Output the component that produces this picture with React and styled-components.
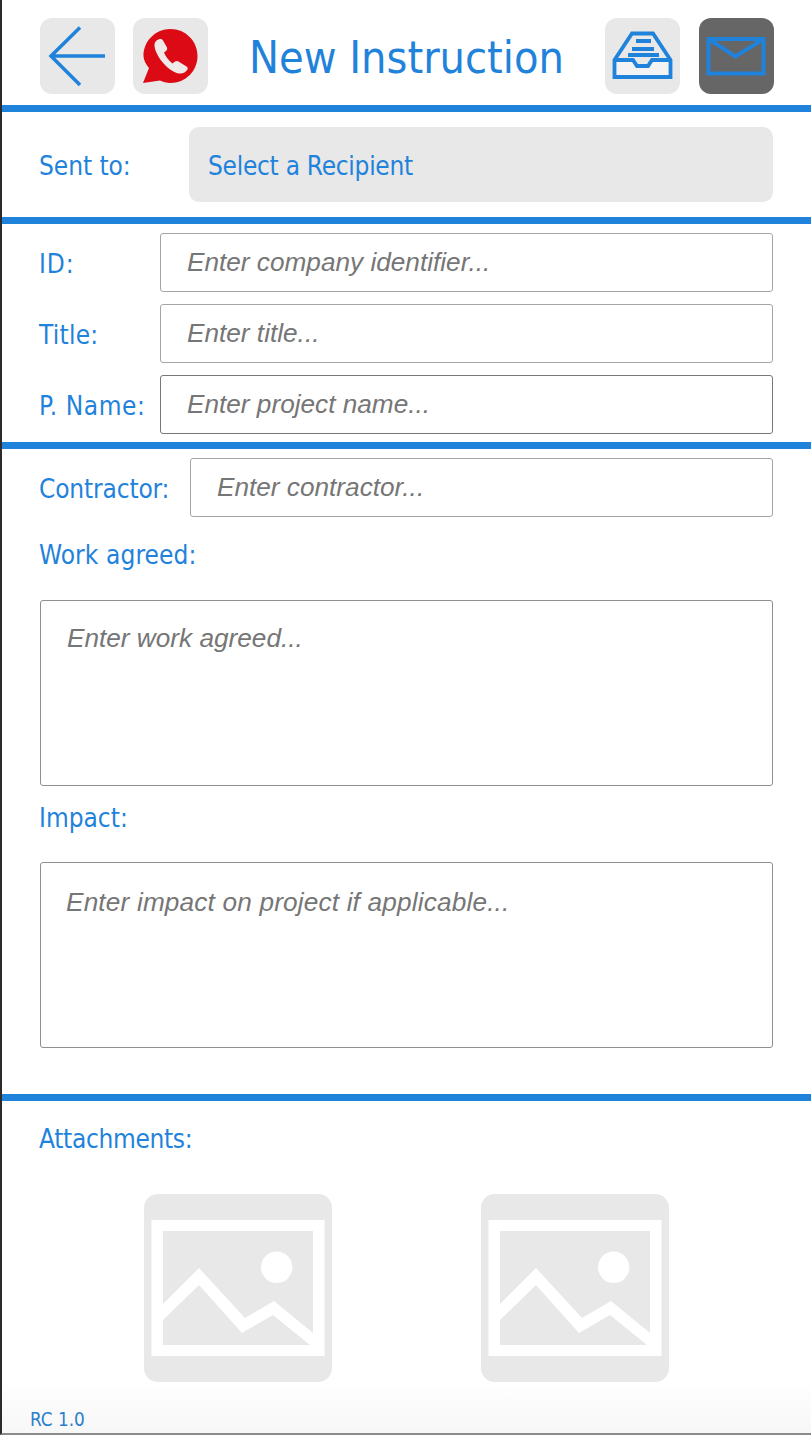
import React from "react";
import styled, { createGlobalStyle } from "styled-components";

const BLUE = "#1f82db";
const GREY = "#e8e8e8";

const Global = createGlobalStyle`
  html, body { margin: 0; padding: 0; background: #fff; }
  * { box-sizing: border-box; }
`;

const Page = styled.div`
  width: 811px;
  height: 1435px;
  overflow: hidden;
  border-left: 2px solid #2b2b2b;
  border-bottom: 2px solid #8a8a8a;
  background: linear-gradient(#fff 1380px, #f7f7f7);
  display: flex;
  flex-direction: column;
  font-family: "DejaVu Sans Condensed", "DejaVu Sans", sans-serif;
  color: ${BLUE};
`;

const Header = styled.header`
  height: 105px;
  flex: none;
  display: flex;
  align-items: flex-start;
  padding: 18px 0 0 38px;
`;

const IconButton = styled.button`
  width: 75px;
  height: 76px;
  flex: none;
  border: 0;
  padding: 0;
  margin-left: ${(p) => p.$gap || 0}px;
  border-radius: 12px;
  background: ${(p) => (p.$active ? "#666666" : GREY)};
  display: flex;
  align-items: center;
  justify-content: center;
`;

const Title = styled.h1`
  margin: 0 0 0 41px;
  width: 356px;
  font-size: 44.6px;
  line-height: 80px;
  font-weight: 400;
  white-space: nowrap;
  color: ${BLUE};
`;

const Rule = styled.div`
  height: 7px;
  flex: none;
  background: ${BLUE};
`;

const Recipient = styled.section`
  height: 105px;
  flex: none;
  display: flex;
  align-items: flex-start;
  padding: 15px 38px 0;
`;

const Label = styled.label`
  display: block;
  flex: none;
  width: ${(p) => p.$width || "auto"};
  font-size: 26px;
  line-height: 32px;
  letter-spacing: ${(p) => p.$tracking ?? -0.15}px;
  white-space: nowrap;
  margin-left: -1px;
`;

const RowLabel = styled(Label)`
  padding-top: 4px;
  margin-right: 1px;
`;

const RecipientLabel = styled(Label)`
  width: 150px;
  margin-top: 23px;
`;

const SelectBox = styled.div`
  width: 584px;
  height: 75px;
  border-radius: 10px;
  background: ${GREY};
  padding-left: 19px;
  font-size: 26px;
  letter-spacing: -0.28px;
  line-height: 78px;
`;

const Fields = styled.section`
  height: 218px;
  flex: none;
  padding: 9px 38px 0;
  display: flex;
  flex-direction: column;
  gap: 13px;
`;

const Row = styled.div`
  display: flex;
  align-items: center;
  flex: none;
  height: 58px;
`;

const TextInput = styled.input`
  flex: 1;
  min-width: 0;
  height: 59px;
  border: 1px solid #a5a5a5;
  border-radius: 3px;
  background: #fff;
  padding: 0 0 0 26px;
  font: italic 26.2px "Liberation Sans", Arial, sans-serif;
  outline: none;
  &::placeholder { color: #767676; opacity: 1; }
`;

const DarkInput = styled(TextInput)`
  border-color: #777;
`;

const Details = styled.section`
  height: 645px;
  flex: none;
  padding: 9px 38px 0;
  display: flex;
  flex-direction: column;
`;

const BlockLabel = styled(Label)`
  margin-top: ${(p) => p.$top}px;
  margin-bottom: ${(p) => p.$bottom}px;
`;

const TextArea = styled.textarea`
  display: block;
  width: 733px;
  height: 186px;
  flex: none;
  resize: none;
  border: 1px solid #8f8f8f;
  border-radius: 3px;
  padding: ${(p) => p.$top}px 26px 0 ${(p) => p.$left}px;
  font: italic 26.2px/32px "Liberation Sans", Arial, sans-serif;
  letter-spacing: ${(p) => p.$tracking || 0}px;
  outline: none;
  background: #fff;
  &::placeholder { color: #767676; opacity: 1; }
`;

const Attachments = styled.section`
  flex: 1;
  padding: 22px 38px 0;
  display: flex;
  flex-direction: column;
`;

const Tiles = styled.div`
  display: flex;
  gap: 149px;
  margin: 39px 0 0 104px;
`;

const Tile = styled.div`
  width: 188px;
  height: 188px;
  border-radius: 14px;
  background: ${GREY};
`;

const Version = styled.div`
  margin: 27px 0 0 -10px;
  font-size: 18.8px;
  line-height: 22px;
  color: #2a7fcc;
`;

const ArrowIcon = () => (
  <svg width="75" height="76" viewBox="0 0 75 76" fill="none">
    <path d="M11 38H65M40 9.500L11 38L40 67" stroke={BLUE} strokeWidth="3.500" />
  </svg>
);

const PhoneIcon = () => (
  <svg width="75" height="76" viewBox="0 0 75 76">
    <path d="M37.500 11C52.500 11 64.500 23 64.500 38C64.500 53 52.500 65 37.500 65C33.500 65 30 64 27 62.500L10 65L16 50C13 46.500 10.500 42 10.500 38C10.500 23 22.500 11 37.500 11Z" fill="#dc0a14" />
    <path d="M21.500 27C21.500 24 24 21.500 27 21C28.500 20.800 29.500 21.500 30 22.500L34 29.500C34.500 31 34 32 33 33L31 34.500C32.500 38.500 36 43 39.500 45.500L42 43.500C43 42.800 44.500 42.800 45.500 43.500L53.500 48.500C54.800 49.500 55 50.500 54.500 51.500C53 54 49.500 56 46 55.500C40 54.500 33.500 49.500 28.500 43C24.500 37.500 21.500 32 21.500 27Z" fill="#f0e9e9" />
  </svg>
);

const InboxIcon = () => (
  <svg width="75" height="76" viewBox="0 0 75 76" fill="none" stroke={BLUE}>
    <path d="M9 43H28L32 48.500H43L47 43H66V59H9Z" fill="#f3f3f3" stroke="none" />
    <path d="M9.500 59V42L27 15.500H48L65.500 42V59Z" strokeWidth="3.800" />
    <path d="M9.500 42H28L32 48H43L47 42H65.500" strokeWidth="3.800" />
    <path d="M31 23H46M27 31H49M23 37H54" strokeWidth="3.800" />
  </svg>
);

const MailIcon = () => (
  <svg width="75" height="76" viewBox="0 0 75 76" fill="none" stroke={BLUE} strokeWidth="4">
    <path d="M9.500 21H64.500V55.500H9.500Z" />
    <path d="M9.500 21L36.500 38.500L64.500 21" />
  </svg>
);

const ImageIcon = () => (
  <svg width="188" height="188" viewBox="0 0 188 188">
    <path d="M7.500 26H180.500V162H7.500ZM19 37V151H169V37Z" fill="#fff" fillRule="evenodd" />
    <path d="M19 110L55 74L101 124L130 107L169 139V151H166L129 121L98 139L55 91L19 126Z" fill="#fff" />
    <circle cx="132.700" cy="73.300" r="15.700" fill="#fff" />
  </svg>
);

export default function App() {
  return (
    <>
      <Global />
      <Page>
        <Header>
          <IconButton aria-label="Back"><ArrowIcon /></IconButton>
          <IconButton aria-label="Call" $gap={18}><PhoneIcon /></IconButton>
          <Title>New Instruction</Title>
          <IconButton aria-label="Inbox"><InboxIcon /></IconButton>
          <IconButton aria-label="New mail" $gap={19} $active><MailIcon /></IconButton>
        </Header>
        <Rule />
        <Recipient>
          <RecipientLabel $tracking={-0.05}>Sent to:</RecipientLabel>
          <SelectBox>Select a Recipient</SelectBox>
        </Recipient>
        <Rule />
        <Fields>
          <Row>
            <RowLabel $width="120px" $tracking={0.9}>ID:</RowLabel>
            <TextInput placeholder="Enter company identifier..." />
          </Row>
          <Row>
            <RowLabel $width="120px" $tracking={0.25}>Title:</RowLabel>
            <TextInput placeholder="Enter title..." />
          </Row>
          <Row>
            <RowLabel $width="120px" $tracking={0.6}>P. Name:</RowLabel>
            <DarkInput placeholder="Enter project name..." />
          </Row>
        </Fields>
        <Rule />
        <Details>
          <Row>
            <RowLabel $width="150px">Contractor:</RowLabel>
            <TextInput placeholder="Enter contractor..." />
          </Row>
          <BlockLabel $top={23} $bottom={29} $tracking={0.1}>Work agreed:</BlockLabel>
          <TextArea $top={21} $left={26} placeholder="Enter work agreed..." />
          <BlockLabel $top={16} $bottom={28} $tracking={0}>Impact:</BlockLabel>
          <TextArea $top={23} $left={25} $tracking={0.17} placeholder="Enter impact on project if applicable..." />
        </Details>
        <Rule />
        <Attachments>
          <Label $tracking={-0.32}>Attachments:</Label>
          <Tiles>
            <Tile><ImageIcon /></Tile>
            <Tile><ImageIcon /></Tile>
          </Tiles>
          <Version>RC 1.0</Version>
        </Attachments>
      </Page>
    </>
  );
}
